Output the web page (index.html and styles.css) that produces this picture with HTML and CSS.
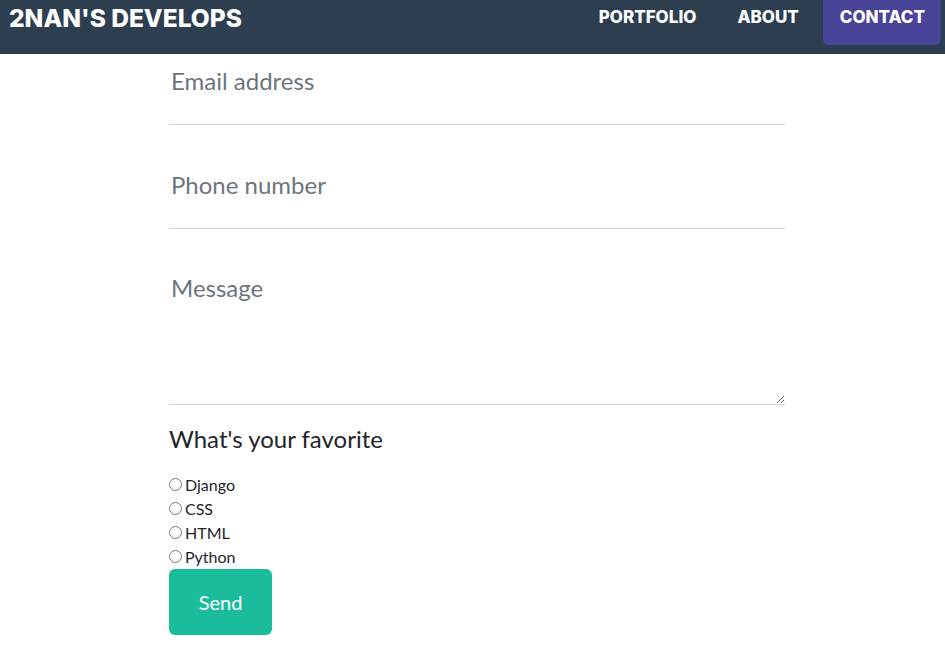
FILE: index.html
```html
<!DOCTYPE html>
<html lang="en">
<head>
<meta charset="utf-8">
<title>2NAN'S DEVELOPS</title>
<link rel="stylesheet" href="styles.css">
</head>
<body>
<nav class="navbar">
  <a class="brand" href="#">2NAN'S DEVELOPS</a>
  <ul class="nav-links">
    <li><a class="nav-link" href="#">PORTFOLIO</a></li>
    <li><a class="nav-link" href="#">ABOUT</a></li>
    <li><a class="nav-link active" href="#">CONTACT</a></li>
  </ul>
</nav>
<main class="content">
  <form class="contact-form">
    <input class="field field-first" type="email" placeholder="Email address">
    <input class="field" type="tel" placeholder="Phone number">
    <textarea class="field field-message" placeholder="Message"></textarea>
    <p class="question">What's your favorite</p>
    <div class="choices">
      <label class="choice"><input type="radio" name="fav" class="radio">Django</label>
      <label class="choice"><input type="radio" name="fav" class="radio">CSS</label>
      <label class="choice"><input type="radio" name="fav" class="radio">HTML</label>
      <label class="choice"><input type="radio" name="fav" class="radio">Python</label>
    </div>
    <button class="send" type="button">Send</button>
  </form>
</main>
</body>
</html>
```

FILE: styles.css
```css
* { box-sizing: border-box; }

body {
  margin: 0;
  font-family: Lato, "Open Sans", sans-serif;
  color: #212529;
  background: #fff;
}

.navbar {
  height: 54px;
  background: #2c3e50;
  display: flex;
  justify-content: space-between;
  align-items: flex-start;
  padding: 0 4px 0 9px;
}

.brand {
  font-family: Inter, "DejaVu Sans", sans-serif;
  font-weight: 800;
  font-size: 24.5px;
  line-height: 36px;
  color: #fff;
  text-decoration: none;
}

.nav-links {
  list-style: none;
  margin: 0;
  padding: 0;
  display: flex;
  gap: 8px;
}

.nav-link {
  display: block;
  height: 45px;
  padding: 5px 16px 0 17px;
  font-family: Inter, "DejaVu Sans", sans-serif;
  font-weight: 800;
  font-size: 17px;
  line-height: 25px;
  color: #fff;
  text-decoration: none;
  border-radius: 0 0 6px 6px;
}

.nav-link.active {
  background: #4a4499;
}

.content {
  padding-left: 169px;
}

.contact-form {
  width: 616px;
}

.field {
  display: block;
  width: 100%;
  margin: 0;
  border: none;
  border-bottom: 1px solid #ced4da;
  border-radius: 0;
  padding: 41px 3px 26px 2px;
  font-family: Lato, sans-serif;
  font-size: 24px;
  line-height: 36px;
  height: 104px;
  color: #212529;
  background: #fff;
  outline: none;
}

.field-first {
  padding-top: 8px;
  height: 71px;
}

.field::placeholder {
  color: #6c757d;
  opacity: 1;
}

.field-message {
  height: 176px;
  resize: vertical;
}

.question {
  margin: 20px 0 0;
  font-size: 24px;
  line-height: 28.8px;
}

.choices {
  margin-top: 19px;
  display: flex;
  flex-direction: column;
}

.choice {
  font-size: 16px;
  line-height: 24px;
  display: block;
}

.radio {
  margin: 5px 3px 0 0;
  width: 13px;
  height: 13px;
  vertical-align: top;
}

.send {
  display: block;
  margin-top: 0;
  width: 103px;
  height: 66px;
  border: none;
  border-radius: 6px;
  background: #1abc9c;
  color: #fff;
  font-family: Lato, sans-serif;
  font-size: 20px;
  line-height: 30px;
  padding: 0;
}
```
